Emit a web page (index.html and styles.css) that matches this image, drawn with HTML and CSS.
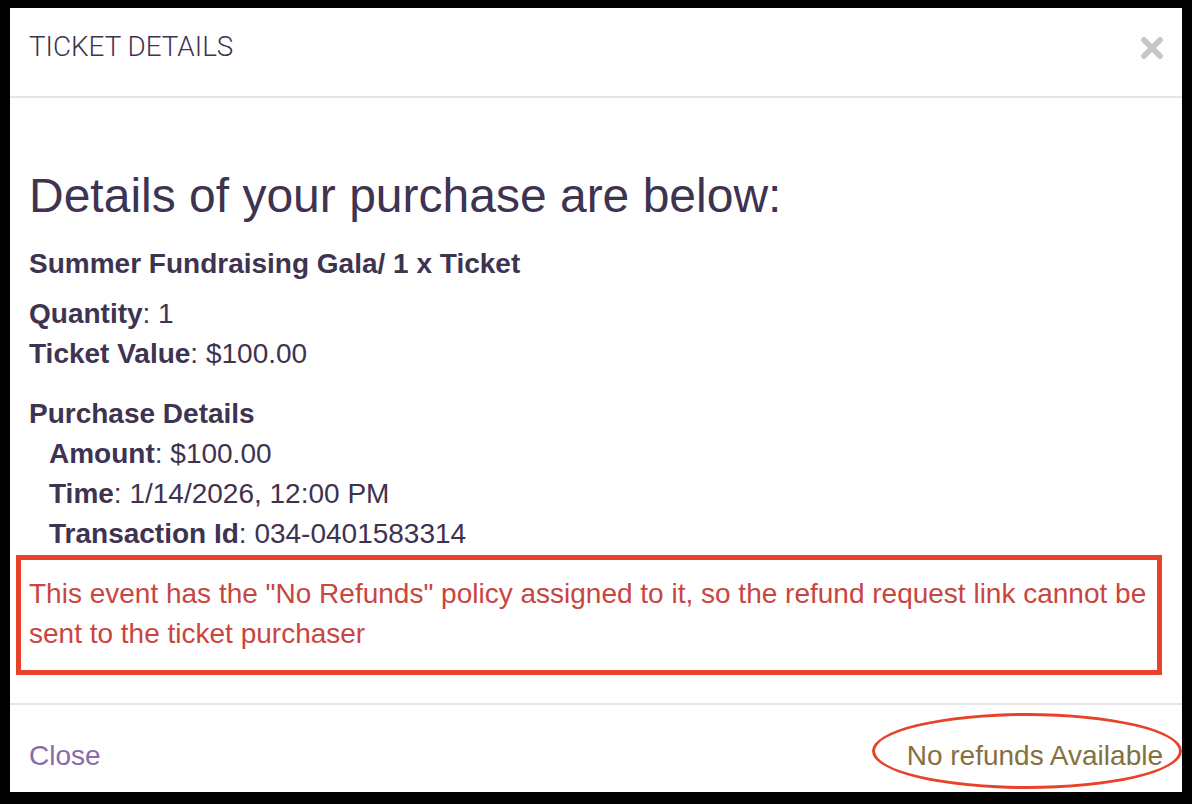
FILE: index.html
```html
<!DOCTYPE html>
<html>
<head>
<meta charset="utf-8">
<link rel="stylesheet" href="styles.css">
</head>
<body>
<div class="frame">
  <div class="modal">
    <div class="modal-header">
      <h1 class="modal-title">TICKET DETAILS</h1>
      <button class="close-btn" aria-label="Close">
        <svg width="22" height="22" viewBox="0 0 22 22"><path d="M3 3 L19 19 M19 3 L3 19" stroke="#c6c6c6" stroke-width="5.5" stroke-linecap="square"/></svg>
      </button>
    </div>
    <div class="modal-body">
      <h2 class="headline">Details of your purchase are below:</h2>
      <h4 class="event">Summer Fundraising Gala/ 1 x Ticket</h4>
      <div class="line"><b>Quantity</b>: 1</div>
      <div class="line"><b>Ticket Value</b>: $100.00</div>
      <div class="section">
        <div class="line"><b>Purchase Details</b></div>
        <div class="indent">
          <div class="line"><b>Amount</b>: $100.00</div>
          <div class="line"><b>Time</b>: 1/14/2026, 12:00 PM</div>
          <div class="line"><b>Transaction Id</b>: 034-0401583314</div>
        </div>
      </div>
      <div class="notice">This event has the "No Refunds" policy assigned to it, so the refund request link cannot be sent to the ticket purchaser</div>
    </div>
    <div class="modal-footer">
      <a class="close-link">Close</a>
      <span class="no-refunds">No refunds Available</span>
    </div>
  </div>
</div>
</body>
</html>
```
FILE: styles.css
```css
html, body {
  margin: 0;
  padding: 0;
  background: #ffffff;
}
body {
  font-family: "Liberation Sans", Arial, sans-serif;
  color: #3e3350;
}
.frame {
  width: 1192px;
  height: 804px;
  box-sizing: border-box;
  border-style: solid;
  border-color: #000;
  border-width: 8px 10px 12px 10px;
  background: #fff;
}
.modal {
  height: 100%;
  display: flex;
  flex-direction: column;
}
.modal-header {
  height: 90px;
  box-sizing: border-box;
  border-bottom: 2px solid #e6e6e6;
  display: flex;
  justify-content: space-between;
  align-items: flex-start;
  padding: 24px 19px 0 19px;
}
.modal-title {
  margin: 0;
  font-family: Roboto, "Liberation Sans", sans-serif;
  font-weight: 300;
  font-size: 27.8px;
  line-height: 30px;
  color: #3e3350;
  letter-spacing: 0;
}
.close-btn {
  border: 0;
  background: none;
  padding: 0;
  margin: 5px 0 0 0;
  width: 22px;
  height: 22px;
  display: block;
}
.close-btn svg { display: block; }
.modal-body {
  padding: 71px 19px 0 19px;
  flex: 1;
}
.headline {
  margin: 0 0 22px 0;
  font-size: 48px;
  font-weight: 400;
  line-height: 53px;
}
.event {
  margin: 0 0 10px 0;
  font-size: 28px;
  font-weight: 700;
  line-height: 40px;
}
.line {
  font-size: 28px;
  line-height: 40px;
}
.line b { font-weight: 700; }
.section {
  margin-top: 20px;
}
.indent {
  padding-left: 20px;
}
.notice {
  margin: 1px 1px 0 -13px;
  border: 5px solid #e8432a;
  padding: 14px 10px 16px 8px;
  color: #c8463f;
  font-size: 28px;
  line-height: 40px;
}
.modal-footer {
  height: 89px;
  box-sizing: border-box;
  border-top: 2px solid #e6e6e6;
  display: flex;
  justify-content: space-between;
  align-items: flex-start;
  padding: 31px 19px 0 19px;
  font-size: 28px;
  line-height: 40px;
}
.close-link {
  color: #8b6aa9;
  text-decoration: none;
}
.no-refunds {
  position: relative;
  color: #86703e;
}
.no-refunds::after {
  content: "";
  position: absolute;
  left: -35px;
  right: -19px;
  top: -23px;
  bottom: -13px;
  border: 3px solid #e8432a;
  border-radius: 50%;
}
```
